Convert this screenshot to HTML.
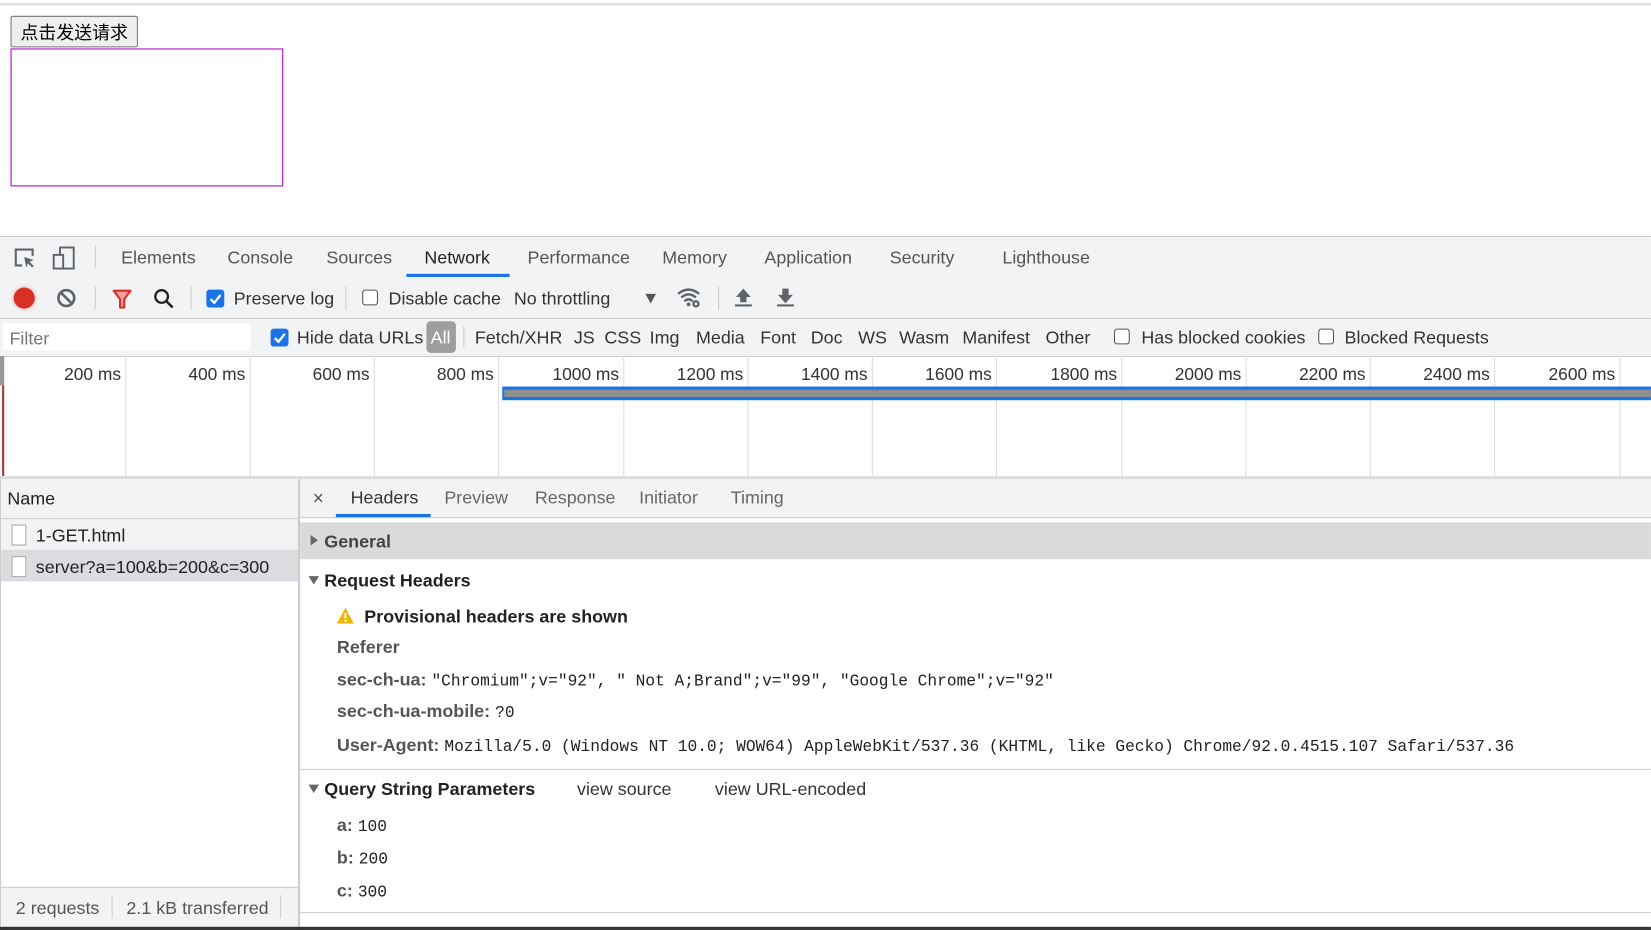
<!DOCTYPE html>
<html><head><meta charset="utf-8">
<style>
html,body{margin:0;padding:0;overflow:hidden;background:#fff;width:1651px;height:930px}
#w{position:absolute;left:0;top:0;width:1568px;height:883px;transform:scale(1.0529,1.0532);transform-origin:0 0;font-family:"Liberation Sans","Noto Sans CJK SC",sans-serif;color:#333;overflow:hidden}
.a{position:absolute}
.t{position:absolute;white-space:nowrap;font-size:17px;line-height:20px;margin-top:1px}
.m{font-family:"Liberation Mono",monospace;font-size:15.4px}
.b{font-weight:bold}
.cb{position:absolute;width:15px;height:15px;border:1.5px solid #555;border-radius:3px;box-sizing:border-box;background:#fff}
.cbc{position:absolute;width:17px;height:17px;border-radius:3px;background:#1a73e8}
.g{position:absolute;top:338px;width:1px;height:114px;background:#ddd}
.lbl{position:absolute;top:346px;white-space:nowrap;font-size:16.5px;line-height:20px;color:#333;text-align:right;width:110px}
.sep{position:absolute;width:1px;background:#ccc}
</style></head><body><div id="w">
<div class="a" style="left:0;top:3px;width:1568px;height:2px;background:#dcdcdc"></div>
<div class="a" style="left:10px;top:15px;width:121px;height:30px;border:1px solid #767676;border-radius:2px;background:#efefef;box-sizing:border-box;font-family:'Noto Sans CJK SC',sans-serif;font-size:17px;line-height:27px;text-align:center;color:#000">点击发送请求</div>
<div class="a" style="left:10px;top:46px;width:259px;height:131px;border:1px solid #a0c;box-sizing:border-box"></div>

<div class="a" style="left:0;top:224px;width:1568px;height:39px;background:#f1f3f4;border-top:1px solid #ccc;border-bottom:1px solid #ccc"></div>
<svg class="a" style="left:12px;top:234px" width="60" height="24" viewBox="0 0 60 24"><path d="M9 18H3V3h16v6" fill="none" stroke="#5f6368" stroke-width="2"/><path d="M11 10l9 3-4 1.5 4 4-1.5 1.5-4-4L13 20z" fill="#5f6368"/><rect x="45" y="1" width="13" height="20" fill="none" stroke="#5f6368" stroke-width="1.8"/><rect x="39" y="8" width="9" height="13" fill="#f1f3f4" stroke="#5f6368" stroke-width="1.8"/></svg>
<div class="sep" style="left:90px;top:233px;height:22px"></div>
<div class="t" style="left:115px;top:234px;color:#555">Elements</div>
<div class="t" style="left:216px;top:234px;color:#555">Console</div>
<div class="t" style="left:310px;top:234px;color:#555">Sources</div>
<div class="t" style="left:403px;top:234px;color:#222">Network</div>
<div class="a" style="left:386px;top:260px;width:98px;height:3px;background:#1a73e8"></div>
<div class="t" style="left:501px;top:234px;color:#555">Performance</div>
<div class="t" style="left:629px;top:234px;color:#555">Memory</div>
<div class="t" style="left:726px;top:234px;color:#555">Application</div>
<div class="t" style="left:845px;top:234px;color:#555">Security</div>
<div class="t" style="left:952px;top:234px;color:#555">Lighthouse</div>

<div class="a" style="left:0;top:264px;width:1568px;height:38px;background:#f1f3f4;border-bottom:1px solid #ccc"></div>
<div class="a" style="left:13px;top:273px;width:20px;height:20px;border-radius:50%;background:#d93025;box-shadow:0 0 4px #f0a0a0"></div>
<svg class="a" style="left:53px;top:273px" width="20" height="20"><circle cx="10" cy="10" r="7.5" fill="none" stroke="#5f6368" stroke-width="2.5"/><path d="M5 5l10 10" stroke="#5f6368" stroke-width="2.5"/></svg>
<div class="sep" style="left:90px;top:272px;height:22px"></div>
<svg class="a" style="left:106px;top:274px" width="20" height="20"><path d="M2 2h16l-6 8v8h-4v-8z" fill="#f4a0a0" stroke="#d93025" stroke-width="2" stroke-linejoin="round"/></svg>
<svg class="a" style="left:145px;top:273px" width="22" height="22"><circle cx="8.5" cy="8.5" r="6" fill="none" stroke="#222" stroke-width="2.2"/><path d="M13 13l6 6" stroke="#222" stroke-width="2.4"/></svg>
<div class="sep" style="left:181px;top:272px;height:22px"></div>
<div class="cbc" style="left:196px;top:275px"></div>
<svg class="a" style="left:196px;top:275px" width="17" height="17"><path d="M4 9l3.5 3.5L13.5 5" fill="none" stroke="#fff" stroke-width="2.2"/></svg>
<div class="t" style="left:222px;top:273px;color:#333">Preserve log</div>
<div class="sep" style="left:328px;top:272px;height:22px"></div>
<div class="cb" style="left:344px;top:275px"></div>
<div class="t" style="left:369px;top:273px">Disable cache</div>
<div class="t" style="left:488px;top:273px">No throttling</div>
<div class="a" style="left:613px;top:279px;width:0;height:0;border-left:5px solid transparent;border-right:5px solid transparent;border-top:9px solid #555"></div>
<svg class="a" style="left:642px;top:272px" width="26" height="22"><path d="M2 7q10-8 20 0M5 10.5q7-6 14 0M8 14q4-3.5 8 0" fill="none" stroke="#5f6368" stroke-width="2.2"/><circle cx="12" cy="17" r="1.8" fill="#5f6368"/><circle cx="19" cy="16.5" r="3.5" fill="#5f6368"/><circle cx="19" cy="16.5" r="1.3" fill="#f1f3f4"/></svg>
<div class="sep" style="left:682px;top:272px;height:22px"></div>
<svg class="a" style="left:697px;top:273px" width="18" height="20"><path d="M9 1L2 9h4v5h6V9h4z" fill="#5f6368"/><rect x="1" y="16" width="16" height="2" fill="#5f6368"/></svg>
<svg class="a" style="left:737px;top:273px" width="18" height="20"><path d="M9 15L2 7h4V1h6v6h4z" fill="#5f6368"/><rect x="1" y="16" width="16" height="2" fill="#5f6368"/></svg>

<div class="a" style="left:0;top:303px;width:1568px;height:35px;background:#f1f3f4;border-bottom:1px solid #ccc"></div>
<div class="a" style="left:3px;top:307px;width:235px;height:26px;background:#fff"></div>
<div class="t" style="left:9px;top:311px;color:#777">Filter</div>
<div class="cbc" style="left:257px;top:312px"></div>
<svg class="a" style="left:257px;top:312px" width="17" height="17"><path d="M4 9l3.5 3.5L13.5 5" fill="none" stroke="#fff" stroke-width="2.2"/></svg>
<div class="t" style="left:282px;top:310px">Hide data URLs</div>
<div class="a" style="left:405px;top:305px;width:28px;height:30px;border-radius:4px;background:#9e9e9e"></div>
<div class="t" style="left:409px;top:310px;color:#fff">All</div>
<div class="sep" style="left:440px;top:310px;height:20px"></div>
<div class="t" style="left:451px;top:310px">Fetch/XHR</div>
<div class="t" style="left:545px;top:310px">JS</div>
<div class="t" style="left:574px;top:310px">CSS</div>
<div class="t" style="left:617px;top:310px">Img</div>
<div class="t" style="left:661px;top:310px">Media</div>
<div class="t" style="left:722px;top:310px">Font</div>
<div class="t" style="left:770px;top:310px">Doc</div>
<div class="t" style="left:815px;top:310px">WS</div>
<div class="t" style="left:854px;top:310px">Wasm</div>
<div class="t" style="left:914px;top:310px">Manifest</div>
<div class="t" style="left:993px;top:310px">Other</div>
<div class="cb" style="left:1058px;top:312px"></div>
<div class="t" style="left:1084px;top:310px">Has blocked cookies</div>
<div class="cb" style="left:1252px;top:312px"></div>
<div class="t" style="left:1277px;top:310px">Blocked Requests</div>

<div class="g" style="left:119px"></div><div class="g" style="left:237px"></div><div class="g" style="left:355px"></div><div class="g" style="left:473px"></div><div class="g" style="left:592px"></div><div class="g" style="left:710px"></div><div class="g" style="left:828px"></div><div class="g" style="left:946px"></div><div class="g" style="left:1065px"></div><div class="g" style="left:1183px"></div><div class="g" style="left:1301px"></div><div class="g" style="left:1419px"></div><div class="g" style="left:1538px"></div>
<div class="lbl" style="left:5px">200 ms</div><div class="lbl" style="left:123px">400 ms</div><div class="lbl" style="left:241px">600 ms</div><div class="lbl" style="left:359px">800 ms</div><div class="lbl" style="left:478px">1000 ms</div><div class="lbl" style="left:596px">1200 ms</div><div class="lbl" style="left:714px">1400 ms</div><div class="lbl" style="left:832px">1600 ms</div><div class="lbl" style="left:951px">1800 ms</div><div class="lbl" style="left:1069px">2000 ms</div><div class="lbl" style="left:1187px">2200 ms</div><div class="lbl" style="left:1305px">2400 ms</div><div class="lbl" style="left:1424px">2600 ms</div>
<div class="a" style="left:0;top:338px;width:4px;height:28px;background:#999"></div>
<div class="a" style="left:2px;top:366px;width:2px;height:86px;background:#a33"></div>
<div class="a" style="left:477px;top:367px;width:1091px;height:13px;background:#1a73e8"></div>
<div class="a" style="left:479px;top:370px;width:1089px;height:7px;background:#8f8f8f"></div>
<div class="a" style="left:0;top:452px;width:1568px;height:3px;background:#ddd"></div>

<div class="a" style="left:0;top:455px;width:283px;height:428px;background:#fff;border-left:1px solid #ccc;box-sizing:border-box"></div>
<div class="a" style="left:1px;top:455px;width:282px;height:37px;background:#f1f3f4;border-bottom:1px solid #ccc"></div>
<div class="t" style="left:7px;top:463px;color:#222">Name</div>
<div class="a" style="left:1px;top:493px;width:282px;height:29px;background:#f1f3f4"></div>
<div class="a" style="left:1px;top:522px;width:282px;height:30px;background:#dadce0"></div>
<div class="a" style="left:11px;top:498px;width:14px;height:20px;border:1px solid #aaa;background:#fff;box-sizing:border-box"></div>
<div class="t" style="left:34px;top:498px;color:#222">1-GET.html</div>
<div class="a" style="left:11px;top:528px;width:14px;height:20px;border:1px solid #aaa;background:#fff;box-sizing:border-box"></div>
<div class="t" style="left:34px;top:528px;color:#222">server?a=100&amp;b=200&amp;c=300</div>
<div class="a" style="left:1px;top:842px;width:282px;height:41px;background:#f1f3f4;border-top:1px solid #ccc"></div>
<div class="t" style="left:15px;top:852px;color:#555">2 requests</div>
<div class="sep" style="left:106px;top:850px;height:22px"></div>
<div class="t" style="left:120px;top:852px;color:#555">2.1 kB transferred</div>
<div class="sep" style="left:266px;top:850px;height:22px"></div>
<div class="a" style="left:283px;top:455px;width:2px;height:428px;background:#ccc"></div>

<div class="a" style="left:285px;top:455px;width:1283px;height:36px;background:#f1f3f4;border-bottom:1px solid #ccc"></div>
<div class="t" style="left:297px;top:462px;color:#555;font-size:18px">×</div>
<div class="t" style="left:333px;top:462px;color:#333">Headers</div>
<div class="a" style="left:319px;top:488px;width:90px;height:3px;background:#1a73e8"></div>
<div class="t" style="left:422px;top:462px;color:#666">Preview</div>
<div class="t" style="left:508px;top:462px;color:#666">Response</div>
<div class="t" style="left:607px;top:462px;color:#666">Initiator</div>
<div class="t" style="left:694px;top:462px;color:#666">Timing</div>
<div class="a" style="left:285px;top:496px;width:1283px;height:35px;background:#dadada"></div>
<div class="a" style="left:295px;top:508px;width:0;height:0;border-top:5px solid transparent;border-bottom:5px solid transparent;border-left:7px solid #666"></div>
<div class="t b" style="left:308px;top:504px;color:#444">General</div>
<div class="a" style="left:293px;top:547px;width:0;height:0;border-left:5px solid transparent;border-right:5px solid transparent;border-top:8px solid #666"></div>
<div class="t b" style="left:308px;top:541px;color:#222">Request Headers</div>
<svg class="a" style="left:319px;top:576px" width="18" height="17"><path d="M9 1L17 16H1z" fill="#f2b600"/><rect x="8" y="6" width="2" height="5" fill="#fff"/><rect x="8" y="12.5" width="2" height="2" fill="#fff"/></svg>
<div class="t b" style="left:346px;top:575px;color:#222">Provisional headers are shown</div>
<div class="t b" style="left:320px;top:604px;color:#555">Referer</div>
<div class="t" style="left:320px;top:635px"><span class="b" style="color:#555">sec-ch-ua:</span> <span class="m" style="color:#222">"Chromium";v="92", " Not A;Brand";v="99", "Google Chrome";v="92"</span></div>
<div class="t" style="left:320px;top:665px"><span class="b" style="color:#555">sec-ch-ua-mobile:</span> <span class="m" style="color:#222">?0</span></div>
<div class="t" style="left:320px;top:697px"><span class="b" style="color:#555">User-Agent:</span> <span class="m" style="color:#222">Mozilla/5.0 (Windows NT 10.0; WOW64) AppleWebKit/537.36 (KHTML, like Gecko) Chrome/92.0.4515.107 Safari/537.36</span></div>
<div class="a" style="left:285px;top:730px;width:1283px;height:1px;background:#ccc"></div>
<div class="a" style="left:293px;top:745px;width:0;height:0;border-left:5px solid transparent;border-right:5px solid transparent;border-top:8px solid #666"></div>
<div class="t b" style="left:308px;top:739px;color:#222">Query String Parameters</div>
<div class="t" style="left:548px;top:739px">view source</div>
<div class="t" style="left:679px;top:739px">view URL-encoded</div>
<div class="t" style="left:320px;top:773px"><span class="b" style="color:#555">a:</span> <span class="m" style="color:#222">100</span></div>
<div class="t" style="left:320px;top:804px"><span class="b" style="color:#555">b:</span> <span class="m" style="color:#222">200</span></div>
<div class="t" style="left:320px;top:835px"><span class="b" style="color:#555">c:</span> <span class="m" style="color:#222">300</span></div>
<div class="a" style="left:285px;top:866px;width:1283px;height:1px;background:#ccc"></div>
<div class="a" style="left:0;top:880px;width:1568px;height:3px;background:#333"></div>
</div></body></html>
